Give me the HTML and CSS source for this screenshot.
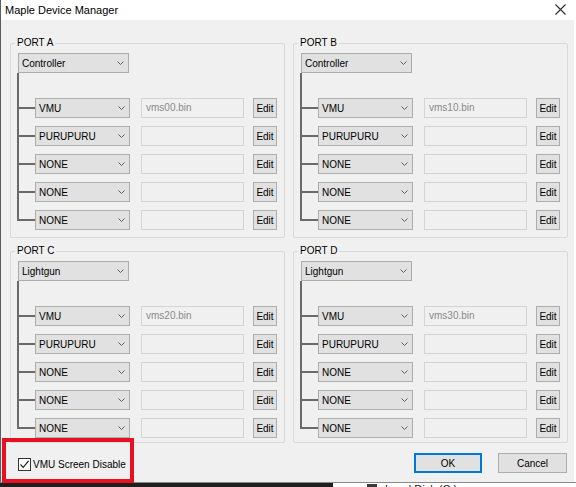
FILE: index.html
```html
<!DOCTYPE html>
<html>
<head>
<meta charset="utf-8">
<title>Maple Device Manager</title>
<link rel="stylesheet" href="styles.css">
</head>
<body>
<div class="window">
  <div class="titlebar">
    <span class="title">Maple Device Manager</span>
    <svg class="close" width="11" height="11" viewBox="0 0 11 11"><path d="M0.5 0.5 L10.5 10.5 M10.5 0.5 L0.5 10.5" stroke="#2b2b2b" stroke-width="1.1" fill="none"/></svg>
  </div>
  <div class="content">
    <div class="ports">
      <fieldset class="port">
        <legend>PORT A</legend>
        <div class="combo main"><span>Controller</span><svg class="chev" width="7" height="4" viewBox="0 0 7 4"><path d="M0.5 0.5 L3.5 3.5 L6.5 0.5" stroke="#5f5f5f" stroke-width="1" fill="none"/></svg></div>
        <div class="tree">
          <div class="row"><div class="combo sub"><span>VMU</span><svg class="chev" width="7" height="4" viewBox="0 0 7 4"><path d="M0.5 0.5 L3.5 3.5 L6.5 0.5" stroke="#5f5f5f" stroke-width="1" fill="none"/></svg></div><div class="textbox">vms00.bin</div><div class="btn edit">Edit</div></div>
          <div class="row"><div class="combo sub"><span>PURUPURU</span><svg class="chev" width="7" height="4" viewBox="0 0 7 4"><path d="M0.5 0.5 L3.5 3.5 L6.5 0.5" stroke="#5f5f5f" stroke-width="1" fill="none"/></svg></div><div class="textbox"></div><div class="btn edit">Edit</div></div>
          <div class="row"><div class="combo sub"><span>NONE</span><svg class="chev" width="7" height="4" viewBox="0 0 7 4"><path d="M0.5 0.5 L3.5 3.5 L6.5 0.5" stroke="#5f5f5f" stroke-width="1" fill="none"/></svg></div><div class="textbox"></div><div class="btn edit">Edit</div></div>
          <div class="row"><div class="combo sub"><span>NONE</span><svg class="chev" width="7" height="4" viewBox="0 0 7 4"><path d="M0.5 0.5 L3.5 3.5 L6.5 0.5" stroke="#5f5f5f" stroke-width="1" fill="none"/></svg></div><div class="textbox"></div><div class="btn edit">Edit</div></div>
          <div class="row last"><div class="combo sub"><span>NONE</span><svg class="chev" width="7" height="4" viewBox="0 0 7 4"><path d="M0.5 0.5 L3.5 3.5 L6.5 0.5" stroke="#5f5f5f" stroke-width="1" fill="none"/></svg></div><div class="textbox"></div><div class="btn edit">Edit</div></div>
        </div>
      </fieldset>
      <fieldset class="port">
        <legend>PORT B</legend>
        <div class="combo main"><span>Controller</span><svg class="chev" width="7" height="4" viewBox="0 0 7 4"><path d="M0.5 0.5 L3.5 3.5 L6.5 0.5" stroke="#5f5f5f" stroke-width="1" fill="none"/></svg></div>
        <div class="tree">
          <div class="row"><div class="combo sub"><span>VMU</span><svg class="chev" width="7" height="4" viewBox="0 0 7 4"><path d="M0.5 0.5 L3.5 3.5 L6.5 0.5" stroke="#5f5f5f" stroke-width="1" fill="none"/></svg></div><div class="textbox">vms10.bin</div><div class="btn edit">Edit</div></div>
          <div class="row"><div class="combo sub"><span>PURUPURU</span><svg class="chev" width="7" height="4" viewBox="0 0 7 4"><path d="M0.5 0.5 L3.5 3.5 L6.5 0.5" stroke="#5f5f5f" stroke-width="1" fill="none"/></svg></div><div class="textbox"></div><div class="btn edit">Edit</div></div>
          <div class="row"><div class="combo sub"><span>NONE</span><svg class="chev" width="7" height="4" viewBox="0 0 7 4"><path d="M0.5 0.5 L3.5 3.5 L6.5 0.5" stroke="#5f5f5f" stroke-width="1" fill="none"/></svg></div><div class="textbox"></div><div class="btn edit">Edit</div></div>
          <div class="row"><div class="combo sub"><span>NONE</span><svg class="chev" width="7" height="4" viewBox="0 0 7 4"><path d="M0.5 0.5 L3.5 3.5 L6.5 0.5" stroke="#5f5f5f" stroke-width="1" fill="none"/></svg></div><div class="textbox"></div><div class="btn edit">Edit</div></div>
          <div class="row last"><div class="combo sub"><span>NONE</span><svg class="chev" width="7" height="4" viewBox="0 0 7 4"><path d="M0.5 0.5 L3.5 3.5 L6.5 0.5" stroke="#5f5f5f" stroke-width="1" fill="none"/></svg></div><div class="textbox"></div><div class="btn edit">Edit</div></div>
        </div>
      </fieldset>
      <fieldset class="port lower">
        <legend>PORT C</legend>
        <div class="combo main"><span>Lightgun</span><svg class="chev" width="7" height="4" viewBox="0 0 7 4"><path d="M0.5 0.5 L3.5 3.5 L6.5 0.5" stroke="#5f5f5f" stroke-width="1" fill="none"/></svg></div>
        <div class="tree">
          <div class="row"><div class="combo sub"><span>VMU</span><svg class="chev" width="7" height="4" viewBox="0 0 7 4"><path d="M0.5 0.5 L3.5 3.5 L6.5 0.5" stroke="#5f5f5f" stroke-width="1" fill="none"/></svg></div><div class="textbox">vms20.bin</div><div class="btn edit">Edit</div></div>
          <div class="row"><div class="combo sub"><span>PURUPURU</span><svg class="chev" width="7" height="4" viewBox="0 0 7 4"><path d="M0.5 0.5 L3.5 3.5 L6.5 0.5" stroke="#5f5f5f" stroke-width="1" fill="none"/></svg></div><div class="textbox"></div><div class="btn edit">Edit</div></div>
          <div class="row"><div class="combo sub"><span>NONE</span><svg class="chev" width="7" height="4" viewBox="0 0 7 4"><path d="M0.5 0.5 L3.5 3.5 L6.5 0.5" stroke="#5f5f5f" stroke-width="1" fill="none"/></svg></div><div class="textbox"></div><div class="btn edit">Edit</div></div>
          <div class="row"><div class="combo sub"><span>NONE</span><svg class="chev" width="7" height="4" viewBox="0 0 7 4"><path d="M0.5 0.5 L3.5 3.5 L6.5 0.5" stroke="#5f5f5f" stroke-width="1" fill="none"/></svg></div><div class="textbox"></div><div class="btn edit">Edit</div></div>
          <div class="row last"><div class="combo sub"><span>NONE</span><svg class="chev" width="7" height="4" viewBox="0 0 7 4"><path d="M0.5 0.5 L3.5 3.5 L6.5 0.5" stroke="#5f5f5f" stroke-width="1" fill="none"/></svg></div><div class="textbox"></div><div class="btn edit">Edit</div></div>
        </div>
      </fieldset>
      <fieldset class="port lower">
        <legend>PORT D</legend>
        <div class="combo main"><span>Lightgun</span><svg class="chev" width="7" height="4" viewBox="0 0 7 4"><path d="M0.5 0.5 L3.5 3.5 L6.5 0.5" stroke="#5f5f5f" stroke-width="1" fill="none"/></svg></div>
        <div class="tree">
          <div class="row"><div class="combo sub"><span>VMU</span><svg class="chev" width="7" height="4" viewBox="0 0 7 4"><path d="M0.5 0.5 L3.5 3.5 L6.5 0.5" stroke="#5f5f5f" stroke-width="1" fill="none"/></svg></div><div class="textbox">vms30.bin</div><div class="btn edit">Edit</div></div>
          <div class="row"><div class="combo sub"><span>PURUPURU</span><svg class="chev" width="7" height="4" viewBox="0 0 7 4"><path d="M0.5 0.5 L3.5 3.5 L6.5 0.5" stroke="#5f5f5f" stroke-width="1" fill="none"/></svg></div><div class="textbox"></div><div class="btn edit">Edit</div></div>
          <div class="row"><div class="combo sub"><span>NONE</span><svg class="chev" width="7" height="4" viewBox="0 0 7 4"><path d="M0.5 0.5 L3.5 3.5 L6.5 0.5" stroke="#5f5f5f" stroke-width="1" fill="none"/></svg></div><div class="textbox"></div><div class="btn edit">Edit</div></div>
          <div class="row"><div class="combo sub"><span>NONE</span><svg class="chev" width="7" height="4" viewBox="0 0 7 4"><path d="M0.5 0.5 L3.5 3.5 L6.5 0.5" stroke="#5f5f5f" stroke-width="1" fill="none"/></svg></div><div class="textbox"></div><div class="btn edit">Edit</div></div>
          <div class="row last"><div class="combo sub"><span>NONE</span><svg class="chev" width="7" height="4" viewBox="0 0 7 4"><path d="M0.5 0.5 L3.5 3.5 L6.5 0.5" stroke="#5f5f5f" stroke-width="1" fill="none"/></svg></div><div class="textbox"></div><div class="btn edit">Edit</div></div>
        </div>
      </fieldset>
    </div>
    <div class="footer">
      <label class="check"><span class="box"><svg width="11" height="11" viewBox="0 0 11 11"><path d="M1.5 5.5 L4.2 8.4 L9.6 1.8" stroke="#222" stroke-width="1.2" fill="none"/></svg></span>VMU Screen Disable</label>
      <div class="buttons"><div class="btn ok">OK</div><div class="btn cancel">Cancel</div></div>
    </div>
    <div class="highlight"></div>
  </div>
</div>
<div class="behind">
  <div class="behind-dark"></div>
  <div class="behind-light"><span class="drive-icon"></span><span class="drive-text">Local Disk (C:)</span></div>
</div>
</body>
</html>
```

FILE: styles.css
```css
* { box-sizing: border-box; }
html, body { margin: 0; padding: 0; }
body {
  width: 576px;
  height: 487px;
  overflow: hidden;
  background: #1f1f1f;
  font-family: "Liberation Sans", Arial, sans-serif;
  font-size: 10px;
  color: #000;
}
.window {
  width: 576px;
  height: 483px;
  display: flex;
  flex-direction: column;
  border-left: 1px solid #5c5c5c;
  border-bottom: 1px solid #8a8a8a;
  background: #fff;
}
.titlebar {
  height: 20px;
  flex: none;
  display: flex;
  align-items: center;
  justify-content: space-between;
  padding: 0 10px 0 4px;
  background: #fff;
}
.title { font-size: 11px; color: #000; }
.close { display: block; margin-top: -2px; }
.content {
  flex: 1;
  position: relative;
  background: #f0f0f0;
  margin-right: 2px;
  padding: 17px 0 0 9px;
}
.ports {
  display: grid;
  grid-template-columns: 275px 275px;
  column-gap: 8px;
  row-gap: 7px;
}
.port {
  margin: 0;
  min-width: 0;
  border: 1px solid #d9d9d9;
  border-radius: 2px;
  padding: 4px 7px 16px 7px;
}
.port.lower { padding-bottom: 13px; }
.port legend {
  padding: 0 2px;
  margin-left: -3px;
  line-height: 12px;
  font-size: 10px;
}
.combo {
  height: 20px;
  border: 1px solid #adadad;
  background: #e1e1e1;
  display: flex;
  align-items: center;
  justify-content: space-between;
  padding: 0 4px 0 3px;
  flex: none;
}
.combo.main { width: 111px; }
.combo.sub { width: 95px; margin-right: 11px; }
.chev { display: block; }
.tree {
  margin-left: -1px;
  border-left: 2px solid #6a6a6a;
  padding-top: 25px;
  display: flex;
  flex-direction: column;
  row-gap: 8px;
}
.row {
  height: 20px;
  display: flex;
  align-items: center;
}
.row::before {
  content: "";
  flex: none;
  width: 16px;
  height: 2px;
  background: #6a6a6a;
}
.row.last { margin-bottom: -9px; }
.textbox {
  width: 103px;
  height: 20px;
  flex: none;
  margin-right: 9px;
  border: 1px solid #d4d4d4;
  background: #f0f0f0;
  color: #8a8a8a;
  padding-left: 4px;
  line-height: 18px;
}
.btn {
  height: 20px;
  border: 1px solid #adadad;
  background: #e1e1e1;
  display: flex;
  align-items: center;
  justify-content: center;
  flex: none;
}
.edit { width: 24px; }
.footer {
  margin-top: 10px;
  height: 20px;
  display: flex;
  align-items: center;
  justify-content: space-between;
  padding-left: 8px;
  padding-right: 7px;
}
.check {
  display: flex;
  align-items: center;
  column-gap: 2px;
  margin-top: 2px;
}
.box {
  width: 13px;
  height: 13px;
  border: 1px solid #333;
  background: #fff;
  display: flex;
  align-items: center;
  justify-content: center;
}
.box svg { display: block; }
.buttons { display: flex; column-gap: 16px; }
.ok { width: 68px; border: 2px solid #0078d7; }
.cancel { width: 69px; }
.highlight {
  position: absolute;
  left: 1px;
  top: 418px;
  width: 132px;
  height: 45px;
  border: 4px solid #e81123;
}
.behind {
  height: 4px;
  display: flex;
  overflow: hidden;
}
.behind-dark { width: 333px; background: #1f1f1f; }
.behind-light {
  flex: 1;
  background: #ffffff;
  display: flex;
  align-items: flex-start;
  padding-left: 34px;
}
.drive-icon { width: 10px; height: 4px; background: #3a3a3a; margin-top: 1px; }
.drive-text { margin-left: 8px; font-size: 11px; line-height: 11px; margin-top: 1px; color: #222; }
```
